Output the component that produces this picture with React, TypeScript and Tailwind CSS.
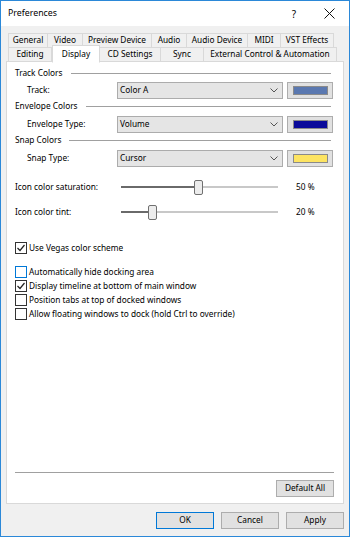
import React from 'react';

const row1 = [
  { label: 'General', w: 40 },
  { label: 'Video', w: 36 },
  { label: 'Preview Device', w: 70 },
  { label: 'Audio', w: 36 },
  { label: 'Audio Device', w: 62 },
  { label: 'MIDI', w: 34 },
  { label: 'VST Effects', w: 54 },
];

const row2 = [
  { label: 'Editing', w: 44 },
  { label: 'Display', w: 48, active: true },
  { label: 'CD Settings', w: 62 },
  { label: 'Sync', w: 44 },
  { label: 'External Control & Automation', w: 134 },
];

const Tab: React.FC<{ label: string; w: number; active?: boolean }> = ({ label, w, active }) => (
  <div
    style={{ width: w }}
    className={
      active
        ? 'relative z-10 -mt-[2px] mb-[-1px] h-[18px] bg-white border border-[#d9d9d9] border-b-white flex items-center justify-center whitespace-nowrap'
        : 'h-[15px] bg-[#f0f0f0] border border-[#d9d9d9] flex items-center justify-center whitespace-nowrap -ml-px first:ml-0'
    }
  >
    {label}
  </div>
);

const GroupHeading: React.FC<{ title: string }> = ({ title }) => (
  <div className="h-[14px] flex items-center gap-[8px] pr-[3px]">
    <span>{title}</span>
    <div className="flex-1 h-px bg-[#a0a0a0]" />
  </div>
);

const ColorRow: React.FC<{ label: string; value: string; color: string; mt: string }> = ({ label, value, color, mt }) => (
  <div className={`flex items-center h-[18px] ${mt}`}>
    <span className="w-[102px] pl-[12px]">{label}</span>
    <div className="w-[166px] h-[17px] bg-[#e5e5e5] border border-[#acacac] flex items-center justify-between pl-[2px] pr-[4px]">
      <span>{value}</span>
      <svg width="8" height="5" viewBox="0 0 8 5">
        <path d="M0.5 0.5 L4 4 L7.5 0.5" fill="none" stroke="#555" strokeWidth="1" />
      </svg>
    </div>
    <div className="ml-[4px] w-[46px] h-[17px] bg-[#e1e1e1] border border-[#adadad] flex items-center justify-center">
      <div className="w-[35px] h-[9px] border border-[#8a8a8a]" style={{ background: color }} />
    </div>
  </div>
);

const Slider: React.FC<{ label: string; pct: number; value: string; mt: string }> = ({ label, pct, value, mt }) => (
  <div className={`flex items-center h-[20px] ${mt}`}>
    <span className="w-[106px]">{label}</span>
    <div className="relative w-[157px] h-[20px]">
      <div className="absolute left-0 right-0 top-[9px] h-[2px] bg-[#c8c8c8]" />
      <div className="absolute left-0 top-[9px] h-[2px] bg-[#6a6a6a]" style={{ width: `${pct}%` }} />
      <div
        className="absolute top-[3px] w-[9px] h-[15px] bg-[#ececec] border border-[#707070] rounded-[2px]"
        style={{ left: `calc(${pct}% - 4px)` }}
      />
    </div>
    <span className="ml-[18px]">{value}</span>
  </div>
);

const Check: React.FC<{ label: string; checked?: boolean; hover?: boolean; mt?: string }> = ({ label, checked, hover, mt = '' }) => (
  <div className={`flex items-center h-[14px] ${mt}`}>
    <div
      className={`w-[12px] h-[12px] bg-white border flex items-center justify-center ${hover ? 'border-[#0078d7]' : 'border-[#333333]'}`}
    >
      {checked && (
        <svg width="10" height="10" viewBox="0 0 10 10">
          <path d="M1.5 5 L4 7.5 L8.5 2" fill="none" stroke="#222" strokeWidth="1.2" />
        </svg>
      )}
    </div>
    <span className="ml-[2px]">{label}</span>
  </div>
);

const Button: React.FC<{ label: string; primary?: boolean }> = ({ label, primary }) => (
  <div
    className={`w-[58px] h-[17px] bg-[#e1e1e1] border flex items-center justify-center ${primary ? 'border-[#0078d7] border-[1.5px]' : 'border-[#adadad]'}`}
  >
    {label}
  </div>
);

export default function App() {
  return (
    <div
      className="w-[350px] h-[537px] bg-[#f0f0f0] border border-[#2b88d8] flex flex-col text-[#000] text-[8.3px] leading-none overflow-hidden"
      style={{ fontFamily: '"Noto Sans", "Liberation Sans", sans-serif' }}
    >
      {/* title bar */}
      <div className="h-[25px] bg-white flex items-center pl-[7px] shrink-0">
        <span className="text-[8.8px]">Preferences</span>
        <span className="ml-auto mr-[28px] text-[10px]">?</span>
        <svg width="11" height="11" viewBox="0 0 11 11" className="mr-[14px]">
          <path d="M0.5 0.5 L10.5 10.5 M10.5 0.5 L0.5 10.5" stroke="#111" strokeWidth="1" />
        </svg>
      </div>

      <div className="flex flex-col px-[5px]">
        {/* tabs */}
        <div className="mt-[7px] pl-[2px] flex flex-col">
          <div className="flex">
            {row1.map((t) => (
              <Tab key={t.label} {...t} />
            ))}
          </div>
          <div className="flex -mt-px items-end">
            {row2.map((t) => (
              <Tab key={t.label} {...t} />
            ))}
          </div>
        </div>

        {/* panel */}
        <div className="-mt-px w-[338px] h-[443px] bg-white border border-[#d9d9d9] flex flex-col pl-[8px] pr-[9px] pt-[4px] pb-[6px]">
          <GroupHeading title="Track Colors" />
          <ColorRow label="Track:" value="Color A" color="#5a78b0" mt="mt-[1px]" />
          <GroupHeading title="Envelope Colors" />
          <ColorRow label="Envelope Type:" value="Volume" color="#0a0a9a" mt="mt-[2px]" />
          <GroupHeading title="Snap Colors" />
          <ColorRow label="Snap Type:" value="Cursor" color="#fde462" mt="mt-[2px]" />

          <Slider label="Icon color saturation:" pct={49} value="50 %" mt="mt-[10px]" />
          <Slider label="Icon color tint:" pct={20} value="20 %" mt="mt-[5px]" />

          <Check label="Use Vegas color scheme" checked mt="mt-[19px]" />

          <Check label="Automatically hide docking area" hover mt="mt-[10px]" />
          <Check label="Display timeline at bottom of main window" checked />
          <Check label="Position tabs at top of docked windows" />
          <Check label="Allow floating windows to dock (hold Ctrl to override)" />

          <div className="mt-auto h-px bg-[#a0a0a0]" />
          <div className="flex justify-end mt-[7px]">
            <Button label="Default All" />
          </div>
        </div>

        {/* dialog buttons */}
        <div className="flex justify-end gap-[7px] mt-[8px]">
          <Button label="OK" primary />
          <Button label="Cancel" />
          <Button label="Apply" />
        </div>
      </div>
    </div>
  );
}
